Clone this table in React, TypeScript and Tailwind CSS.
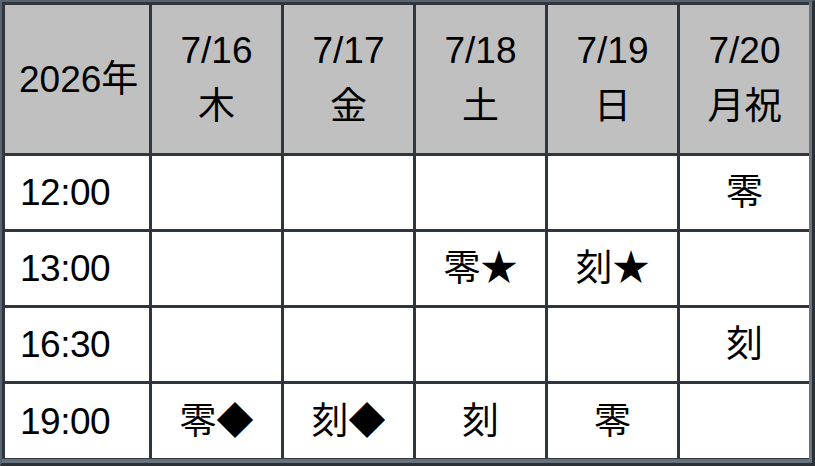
import React from "react";

const days = [
  { d: "7/16", w: "木" },
  { d: "7/17", w: "金" },
  { d: "7/18", w: "土" },
  { d: "7/19", w: "日" },
  { d: "7/20", w: "月祝" },
];

const rows: { t: string; c: string[] }[] = [
  { t: "12:00", c: ["", "", "", "", "零"] },
  { t: "13:00", c: ["", "", "零★", "刻★", ""] },
  { t: "16:30", c: ["", "", "", "", "刻"] },
  { t: "19:00", c: ["零◆", "刻◆", "刻", "零", ""] },
];

export default function App() {
  return (
    <div
      className="w-[815px] h-[466px] overflow-hidden bg-[#2e343b] text-black"
      style={{ fontFamily: '"Liberation Sans", "Noto Sans CJK JP", sans-serif' }}
    >
      <div className="w-full h-full border-t-2 border-l-2 border-t-[#5a646f] border-l-[#5a646f] border-r-[3px] border-b-[3px] border-r-[#2a3036] border-b-[#2a3036]">
        <div className="w-full h-full border-r-[3px] border-b-[4px] border-r-[#6b7682] border-b-[#66717d] bg-[#30363d] pt-[3px] pl-[3px]">
          <div className="grid grid-cols-[144px_repeat(5,129px)] grid-rows-[148px_73px_73px_73px_74px] gap-[3px]">
            <div className="bg-[#c0c0c0] flex items-center pl-[14px] text-[37px] leading-none">
              2026年
            </div>
            {days.map((d) => (
              <div
                key={d.d}
                className="bg-[#c0c0c0] flex flex-col items-center justify-center text-[37px] leading-[56px]"
              >
                <span>{d.d}</span>
                <span>{d.w}</span>
              </div>
            ))}
            {rows.map((r) => (
              <React.Fragment key={r.t}>
                <div className="bg-white flex items-center pl-[15px] text-[37px] leading-none tracking-[-0.5px]">
                  {r.t}
                </div>
                {r.c.map((c, i) => (
                  <div
                    key={i}
                    className="bg-white flex items-center justify-center text-[37px] leading-none"
                  >
                    {c}
                  </div>
                ))}
              </React.Fragment>
            ))}
          </div>
        </div>
      </div>
    </div>
  );
}
